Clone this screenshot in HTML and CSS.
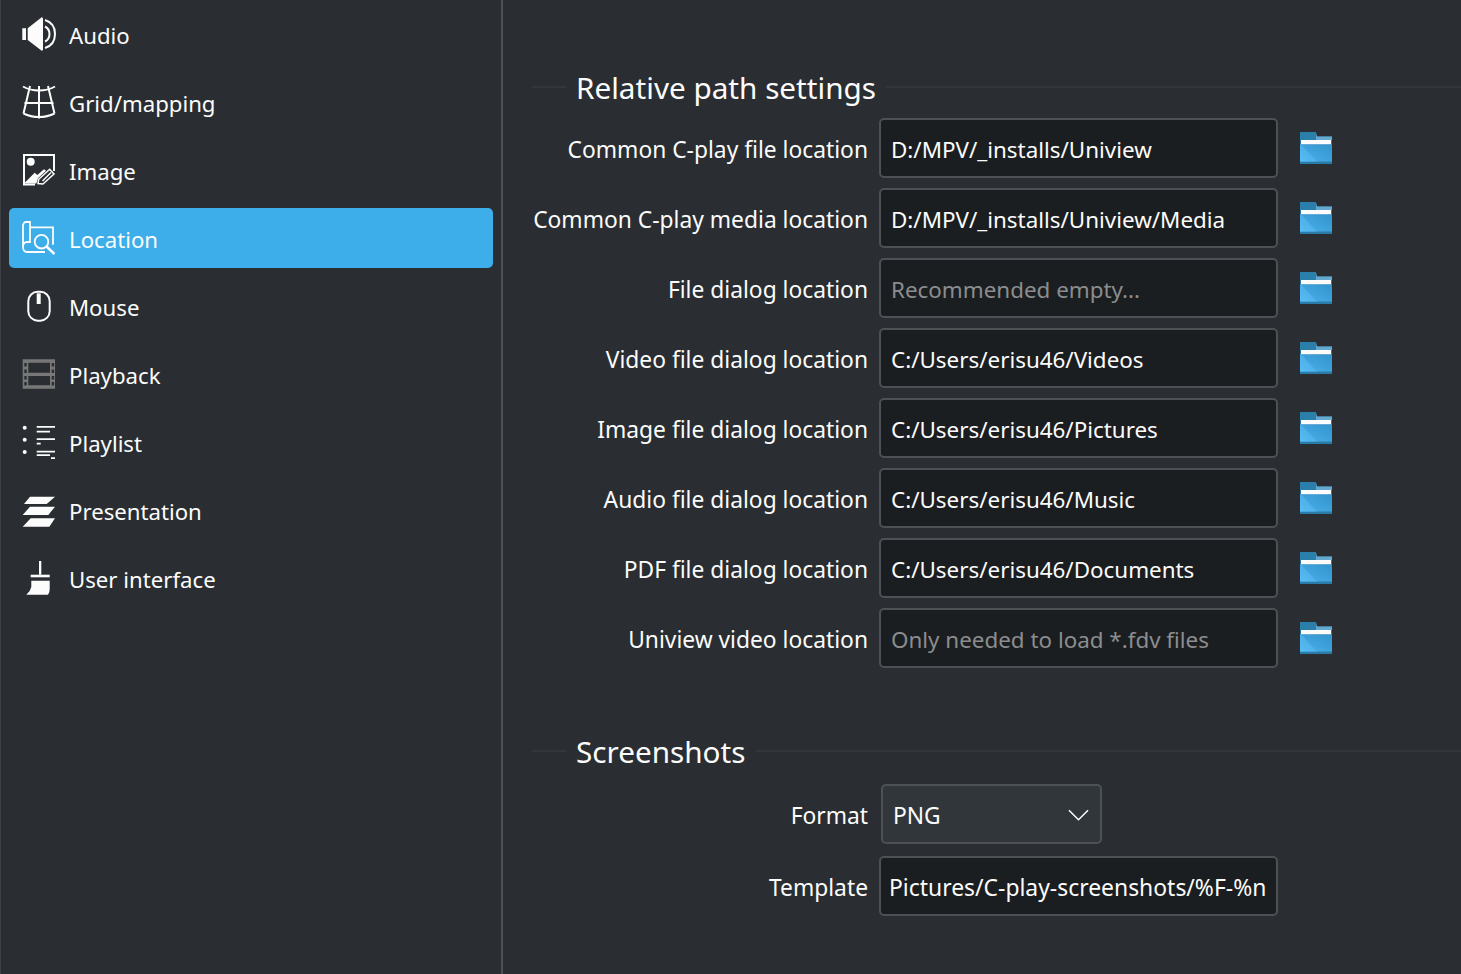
FILE: index.html
```html
<!DOCTYPE html>
<html lang="en">
<head>
    <meta charset="UTF-8">
    <title>Settings - Location</title>
    <link rel="stylesheet" href="styles.css">
</head>
<body>
    <svg class="defs" width="0" height="0">
        <defs>
            <linearGradient id="folderFront" x1="0" y1="1" x2="1" y2="0">
                <stop offset="0" stop-color="#4ab0ea"/>
                <stop offset="1" stop-color="#3494cd"/>
            </linearGradient>
            <linearGradient id="folderShine" x1="0" y1="1" x2="1" y2="0">
                <stop offset="0" stop-color="#58bef5"/>
                <stop offset="1" stop-color="#45a5de"/>
            </linearGradient>
            <symbol id="folder" viewBox="0 0 32 32">
                <path d="M0 0H16V3.500L17 4.500H32V10H0Z" fill="#2a80ab"/>
                <path d="M16 0.500L17 4.500H32V8H16Z" fill="#64a9cf"/>
                <rect x="0" y="8" width="32" height="24" fill="#2a7ba8"/>
                <rect x="1" y="8" width="30" height="4.500" fill="#fcfcfc"/>
                <rect x="0" y="12.500" width="32" height="17" fill="url(#folderFront)"/>
                <path d="M0 12.500H1L17 29.500H0Z" fill="url(#folderShine)"/>
            </symbol>
        </defs>
    </svg>

    <div class="app">
        <nav class="sidebar">
            <a class="nav-item">
                <svg class="nav-icon" viewBox="0 0 34 34"><path d="M0.300 11.300h3.700v11.700H0.300zM5.700 11.300L19.700 0.300l1.300 0.700v32l-1.300 0.700L5.700 23z" fill="#fcfcfc"/><path d="M23 3c6.500 2 10 7.500 10 14s-3.500 12-10 14M23 9.500c3 1.500 4.500 4.200 4.500 7.500s-1.500 6-4.500 7.500" fill="none" stroke="#fcfcfc" stroke-width="2"/></svg>
                <span>Audio</span>
            </a>
            <a class="nav-item">
                <svg class="nav-icon" viewBox="0 0 34 34"><g fill="none" stroke="#fcfcfc" stroke-width="2"><path d="M1 1.500c5 3 10 4 16 4s11-1 16-4"/><path d="M2.500 18h29"/><path d="M1.500 28.500c5 2.500 10 3.500 15.500 3.500s10.500-1 15.500-3.500"/><path d="M8 1L1.500 28.500M26 1l6.500 27.500"/><path d="M17 1v32.500"/></g></svg>
                <span>Grid/mapping</span>
            </a>
            <a class="nav-item">
                <svg class="nav-icon" viewBox="0 0 34 34"><path d="M13 31.500H2V2h30v16" fill="none" stroke="#fcfcfc" stroke-width="2"/><circle cx="8.700" cy="8.700" r="4" fill="#fcfcfc"/><path d="M2 30.500L12.700 19.700l2.600 2.300L22 16.300l2 1.400-8 7.600-1.700 5.200z" fill="#fcfcfc"/><path d="M16 30.500l0.700-4.200 11-10 4.300 4.700-11 10zM20.500 28l8.500-8.500" fill="none" stroke="#fcfcfc" stroke-width="1.500"/></svg>
                <span>Image</span>
            </a>
            <a class="nav-item active">
                <svg class="nav-icon" viewBox="0 0 34 34"><g fill="none" stroke="#fcfcfc" stroke-width="1.800"><path d="M23 31H5c-2.500 0-4-2-4-5V5c0-2.500 1.500-4 3-4h4v20H5c-2.500 0-4 2-4 5"/><path d="M8 6.300h23v17.400"/><circle cx="19.500" cy="20.700" r="6.800"/><path d="M24.500 25.500l8 7.500" stroke-width="2.400"/></g></svg>
                <span>Location</span>
            </a>
            <a class="nav-item">
                <svg class="nav-icon" viewBox="0 0 34 34"><rect x="6.300" y="2.700" width="21.400" height="29" rx="9.500" fill="none" stroke="#fcfcfc" stroke-width="2"/><rect x="14.700" y="4.300" width="4" height="10.700" fill="#fcfcfc"/></svg>
                <span>Mouse</span>
            </a>
            <a class="nav-item">
                <svg class="nav-icon" viewBox="0 0 34 34"><path fill-rule="evenodd" d="M0.700 2.300H33v29.400H0.700zM6.300 5.700v10H28v-10zM6.300 19v9.300H28V19zM2.300 6v3.500h2.400V6zM29.700 6v3.500h2.400V6zM2.300 12.500V16h2.400v-3.500zM29.700 12.500V16h2.400v-3.500zM2.300 19v3.500h2.400V19zM29.700 19v3.500h2.400V19zM2.300 25v3.500h2.400V25zM29.700 25v3.500h2.400V25z" fill="#787878"/></svg>
                <span>Playback</span>
            </a>
            <a class="nav-item">
                <svg class="nav-icon" viewBox="0 0 34 34"><g fill="#fcfcfc"><circle cx="2.700" cy="2.700" r="2"/><circle cx="2.700" cy="14.700" r="2"/><circle cx="2.700" cy="27" r="2"/><path d="M14.700 1H33v1.700H14.700zM14.700 5.700H28v1.700H14.700zM14.700 13.300H33V15H14.700zM14.700 17.700h4v1.700h-4zM14.700 25.700H33v1.700H14.700zM14.700 29.300H28V31H14.700zM29 32.300h4V34h-4z"/></g></svg>
                <span>Playlist</span>
            </a>
            <a class="nav-item">
                <svg class="nav-icon" viewBox="0 0 34 34"><g fill="#fcfcfc"><path d="M8 3.700h25L24.700 11H2z"/><path d="M8 13.700h25L26.300 22H0.700z"/><path d="M8.700 25.300H33l-5.700 8.400H0.700z"/></g></svg>
                <span>Presentation</span>
            </a>
            <a class="nav-item">
                <svg class="nav-icon" viewBox="0 0 34 34"><g fill="#fcfcfc"><rect x="17" y="0" width="2.300" height="13.700"/><rect x="8.700" y="13.700" width="19" height="2.600"/><path d="M9.300 19.700h18.400V28q0 4-1.700 5.700H4.300q4.200-3.700 5-7.700z"/></g></svg>
                <span>User interface</span>
            </a>
        </nav>

        <main class="content">
            <h2 class="section-title"><span>Relative path settings</span></h2>
            <div class="form-rows">
                <label class="row-label">Common C-play file location</label>
                <input class="field" type="text" value="D:/MPV/_installs/Uniview">
                <svg class="folder"><use href="#folder"/></svg>

                <label class="row-label">Common C-play media location</label>
                <input class="field" type="text" value="D:/MPV/_installs/Uniview/Media">
                <svg class="folder"><use href="#folder"/></svg>

                <label class="row-label">File dialog location</label>
                <input class="field" type="text" placeholder="Recommended empty...">
                <svg class="folder"><use href="#folder"/></svg>

                <label class="row-label">Video file dialog location</label>
                <input class="field" type="text" value="C:/Users/erisu46/Videos">
                <svg class="folder"><use href="#folder"/></svg>

                <label class="row-label">Image file dialog location</label>
                <input class="field" type="text" value="C:/Users/erisu46/Pictures">
                <svg class="folder"><use href="#folder"/></svg>

                <label class="row-label">Audio file dialog location</label>
                <input class="field" type="text" value="C:/Users/erisu46/Music">
                <svg class="folder"><use href="#folder"/></svg>

                <label class="row-label">PDF file dialog location</label>
                <input class="field" type="text" value="C:/Users/erisu46/Documents">
                <svg class="folder"><use href="#folder"/></svg>

                <label class="row-label">Uniview video location</label>
                <input class="field" type="text" placeholder="Only needed to load *.fdv files">
                <svg class="folder"><use href="#folder"/></svg>
            </div>

            <h2 class="section-title second"><span>Screenshots</span></h2>
            <div class="form-rows tight">
                <label class="row-label">Format</label>
                <div class="combo">
                    <span>PNG</span>
                    <svg class="combo-arrow" viewBox="0 0 22 12"><path d="M1 1l10 10L21 1" fill="none" stroke="#fcfcfc" stroke-width="1.600"/></svg>
                </div>
                <span></span>

                <label class="row-label">Template</label>
                <input class="field template" type="text" value="Pictures/C-play-screenshots/%F-%n">
                <span></span>
            </div>
        </main>
    </div>
</body>
</html>
```

FILE: styles.css
```css
* {
    box-sizing: border-box;
}
html, body {
    height: 100%;
}
body {
    margin: 0;
    background-color: #2a2e32;
    color: #fcfcfc;
    font-family: "Noto Sans", "Open Sans", sans-serif;
    font-size: 22.8px;
    overflow: hidden;
}
.defs {
    position: absolute;
}
.app {
    display: flex;
    height: 974px;
}
.sidebar {
    width: 503px;
    flex-shrink: 0;
    padding: 4px 8px 0 8px;
    border-left: 1px solid #3c4045;
    border-right: 2px solid #4d5257;
    display: flex;
    flex-direction: column;
    gap: 8px;
    font-size: 22.2px;
}
.nav-item {
    display: flex;
    align-items: center;
    height: 60px;
    padding-left: 13px;
    border-radius: 5px;
    gap: 13px;
}
.nav-item span {
    padding-top: 2px;
}
.nav-item.active {
    background-color: #3daee9;
}
.nav-icon {
    width: 34px;
    height: 34px;
    flex-shrink: 0;
}
.content {
    flex: 1;
    padding: 64px 0 0 29px;
}
.section-title {
    display: flex;
    align-items: center;
    height: 48px;
    margin: 0 0 6px;
    font-size: 29.7px;
    font-weight: 400;
    line-height: 48px;
}
.section-title::before {
    content: "";
    width: 34px;
    height: 2px;
    margin-bottom: 2px;
    background-color: #33373b;
}
.section-title::after {
    content: "";
    flex: 1;
    height: 2px;
    margin-bottom: 2px;
    background-color: #33373b;
}
.section-title span {
    padding: 0 10px;
}
.section-title.second {
    margin-top: 60px;
    margin-bottom: 8px;
}
.form-rows {
    display: grid;
    grid-template-columns: 347px 399px 54px;
    grid-auto-rows: 60px;
    row-gap: 10px;
    align-items: center;
}
.form-rows.tight {
    row-gap: 12px;
}
.row-label {
    text-align: right;
    padding: 2px 11px 0 0;
    white-space: nowrap;
}
.field {
    width: 100%;
    height: 60px;
    padding: 2px 10px 0;
    font: inherit;
    font-size: 22.4px;
    color: #fcfcfc;
    background-color: #1b1e20;
    border: 2px solid #4d5155;
    border-radius: 5px;
    outline: none;
}
.field::placeholder {
    color: #8b8d8f;
    opacity: 1;
}
.field.template {
    padding: 2px 8px 0;
    font-size: 22.9px;
}
.folder {
    width: 32px;
    height: 32px;
    justify-self: end;
}
.combo {
    display: flex;
    align-items: center;
    justify-content: space-between;
    width: 221px;
    height: 60px;
    margin-left: 2px;
    padding: 2px 11px 0 10px;
    background-color: #31363b;
    border: 2px solid #4d5155;
    border-radius: 5px;
}
.combo-arrow {
    width: 21px;
    height: 12px;
}
```
